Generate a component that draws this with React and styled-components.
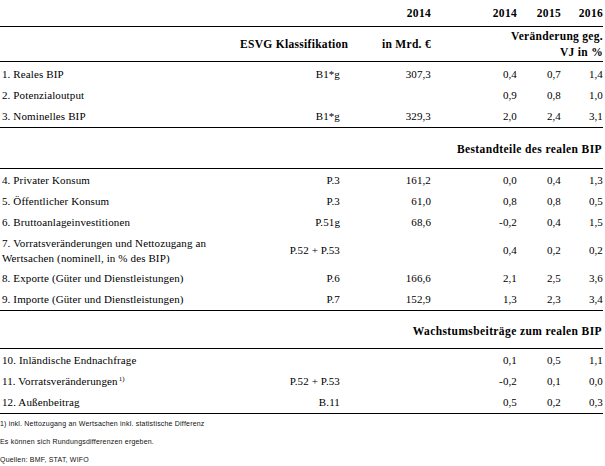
import React from "react";
import styled, { createGlobalStyle } from "styled-components";

const COLS = "240px 100px 91px 86px 44px 42px";

const GlobalStyle = createGlobalStyle`
  html, body { margin: 0; padding: 0; background: #fff; }
  body { font-family: "Liberation Serif", "Times New Roman", serif; color: #000; }
`;

const Page = styled.div`
  width: 605px;
  height: 466px;
  overflow: hidden;
  box-sizing: border-box;
  padding-right: 2px;
`;

const Row = styled.div`
  display: grid;
  grid-template-columns: ${COLS};
  height: ${(p) => p.$h || 21}px;
  align-items: center;
  font-family: "Liberation Serif", "Times New Roman", serif;
  font-size: ${(p) => (p.$bold ? 11.5 : 11)}px;
  letter-spacing: ${(p) => (p.$bold ? 0.3 : 0.12)}px;
  line-height: 15px;
  font-weight: ${(p) => (p.$bold ? 700 : 400)};
`;

const Cell = styled.div`
  text-align: ${(p) => (p.$left ? "left" : "right")};
  padding-left: ${(p) => (p.$left ? "2px" : "0")};
  grid-column: ${(p) => p.$span || "auto"};
  white-space: nowrap;
  line-height: ${(p) => p.$lh || 15}px;
`;

const Block = styled.div`
  border-top: 1.5px solid #000;
  padding-top: ${(p) => p.$pt || 0}px;
  padding-bottom: ${(p) => p.$pb || 0}px;
`;

const SectionHead = styled.div`
  border-top: 1.5px solid #000;
  height: ${(p) => p.$h}px;
  box-sizing: border-box;
  padding-top: ${(p) => p.$pt}px;
  padding-right: 1px;
  text-align: right;
  font-size: 11.5px;
  letter-spacing: 0.4px;
  line-height: 15px;
  font-weight: 700;
`;

const Notes = styled.div`
  border-top: 1.5px solid #000;
  padding-top: 3px;
  font-family: "Liberation Sans", Arial, sans-serif;
  font-size: 7px;
  letter-spacing: 0.2px;
  color: #111;
`;

const Note = styled.div`
  height: 18px;
  line-height: 14px;
`;

const Sup = styled.sup`
  font-size: 7px;
  line-height: 0;
  vertical-align: 4px;
  margin-left: 1px;
`;

const rowsA = [
  ["1. Reales BIP", "B1*g", "307,3", "0,4", "0,7", "1,4"],
  ["2. Potenzialoutput", "", "", "0,9", "0,8", "1,0"],
  ["3. Nominelles BIP", "B1*g", "329,3", "2,0", "2,4", "3,1"],
];

const rowsB = [
  ["4. Privater Konsum", "P.3", "161,2", "0,0", "0,4", "1,3"],
  ["5. Öffentlicher Konsum", "P.3", "61,0", "0,8", "0,8", "0,5"],
  ["6. Bruttoanlageinvestitionen", "P.51g", "68,6", "-0,2", "0,4", "1,5"],
  [
    <>
      7. Vorratsveränderungen und Nettozugang an
      <br />
      Wertsachen (nominell, in % des BIP)
    </>,
    "P.52 + P.53",
    "",
    "0,4",
    "0,2",
    "0,2",
    35,
  ],
  ["8. Exporte (Güter und Dienstleistungen)", "P.6", "166,6", "2,1", "2,5", "3,6"],
  ["9. Importe (Güter und Dienstleistungen)", "P.7", "152,9", "1,3", "2,3", "3,4"],
];

const rowsC = [
  ["10. Inländische Endnachfrage", "", "", "0,1", "0,5", "1,1"],
  [
    <>
      11. Vorratsveränderungen<Sup>1)</Sup>
    </>,
    "P.52 + P.53",
    "",
    "-0,2",
    "0,1",
    "0,0",
  ],
  ["12. Außenbeitrag", "B.11", "", "0,5", "0,2", "0,3"],
];

function DataRows({ rows }) {
  return rows.map((r, i) => (
    <Row key={i} $h={r[6]}>
      <Cell $left>{r[0]}</Cell>
      <Cell>{r[1]}</Cell>
      <Cell>{r[2]}</Cell>
      <Cell>{r[3]}</Cell>
      <Cell>{r[4]}</Cell>
      <Cell>{r[5]}</Cell>
    </Row>
  ));
}

export default function App() {
  return (
    <Page>
      <GlobalStyle />
      <Row $bold $h={26}>
        <Cell $left />
        <Cell />
        <Cell>2014</Cell>
        <Cell>2014</Cell>
        <Cell>2015</Cell>
        <Cell>2016</Cell>
      </Row>
      <Block>
        <Row $bold $h={34}>
          <Cell $left />
          <Cell>ESVG Klassifikation</Cell>
          <Cell>in Mrd. €</Cell>
          <Cell $span="4 / 7" $lh={16}>
            Veränderung geg.
            <br />
            VJ in %
          </Cell>
        </Row>
      </Block>
      <Block $pt={2}>
        <DataRows rows={rowsA} />
      </Block>
      <SectionHead $h={41} $pt={14}>Bestandteile des realen BIP</SectionHead>
      <Block $pt={1}>
        <DataRows rows={rowsB} />
      </Block>
      <SectionHead $h={38} $pt={13}>Wachstumsbeiträge zum realen BIP</SectionHead>
      <Block $pt={1}>
        <DataRows rows={rowsC} />
      </Block>
      <Notes>
        <Note>1) inkl. Nettozugang an Wertsachen inkl. statistische Differenz</Note>
        <Note>Es können sich Rundungsdifferenzen ergeben.</Note>
        <Note>Quellen: BMF, STAT, WIFO</Note>
      </Notes>
    </Page>
  );
}
